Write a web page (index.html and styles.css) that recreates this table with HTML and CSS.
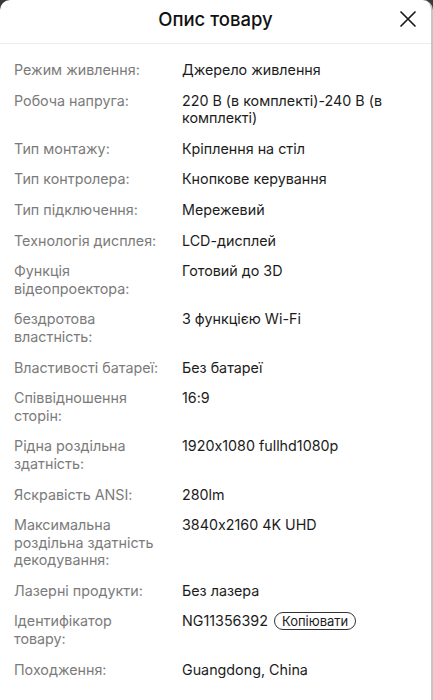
FILE: index.html
```html
<!DOCTYPE html>
<html lang="uk">
<head>
<meta charset="utf-8">
<link rel="stylesheet" href="styles.css">
</head>
<body>
<div class="sheet">
  <header class="head">
    <h1 class="title">Опис товару</h1>
    <button class="close" aria-label="Закрити">
      <svg width="18" height="18" viewBox="0 0 18 18"><path d="M2 2L16 16M16 2L2 16" stroke="#1a1a1a" stroke-width="1.7" stroke-linecap="round" fill="none"/></svg>
    </button>
  </header>
  <dl class="specs">
    <div class="row"><dt>Режим живлення:</dt><dd>Джерело живлення</dd></div>
    <div class="row"><dt>Робоча напруга:</dt><dd>220 В (в комплекті)-240 В (в комплекті)</dd></div>
    <div class="row"><dt>Тип монтажу:</dt><dd>Кріплення на стіл</dd></div>
    <div class="row"><dt>Тип контролера:</dt><dd>Кнопкове керування</dd></div>
    <div class="row"><dt>Тип підключення:</dt><dd>Мережевий</dd></div>
    <div class="row"><dt>Технологія дисплея:</dt><dd>LCD-дисплей</dd></div>
    <div class="row"><dt>Функція відеопроектора:</dt><dd>Готовий до 3D</dd></div>
    <div class="row"><dt>бездротова властність:</dt><dd>З функцією Wi-Fi</dd></div>
    <div class="row"><dt>Властивості батареї:</dt><dd>Без батареї</dd></div>
    <div class="row"><dt>Співвідношення сторін:</dt><dd>16:9</dd></div>
    <div class="row"><dt>Рідна роздільна здатність:</dt><dd>1920x1080 fullhd1080p</dd></div>
    <div class="row"><dt>Яскравість ANSI:</dt><dd>280lm</dd></div>
    <div class="row"><dt>Максимальна роздільна здатність декодування:</dt><dd>3840x2160 4K UHD</dd></div>
    <div class="row"><dt>Лазерні продукти:</dt><dd>Без лазера</dd></div>
    <div class="row"><dt>Ідентифікатор товару:</dt><dd>NG11356392 <span class="copy">Копіювати</span></dd></div>
    <div class="row"><dt>Походження:</dt><dd>Guangdong, China</dd></div>
  </dl>
</div>
</body>
</html>
```

FILE: styles.css
```css
html, body {
  margin: 0;
  padding: 0;
  background: #3a3a3a;
  height: 100%;
}
body {
  font-family: Inter, "Noto Sans", "Liberation Sans", sans-serif;
  font-feature-settings: "calt" 0;
  overflow: hidden;
}
.sheet {
  background: #fff;
  border-radius: 10px 10px 0 0;
  height: 700px;
  box-sizing: border-box;
  border-right: 2px solid #c6c6c6;
  width: 433px;
}
.head {
  height: 44px;
  display: flex;
  align-items: center;
  justify-content: center;
  position: relative;
  border-bottom: 1px solid #ececec;
  box-sizing: border-box;
}
.title {
  margin: 0;
  font-size: 18.5px;
  font-weight: 500;
  color: #111;
  margin-top: -6px;
}
.close {
  position: absolute;
  right: 12px;
  top: 8px;
  border: 0;
  background: none;
  padding: 2px;
  display: flex;
}
.specs {
  margin: 0;
  padding: 17px 14px 0 14px;
  display: flex;
  flex-direction: column;
  gap: 13px;
}
.row {
  display: grid;
  grid-template-columns: 150px 1fr;
  column-gap: 18px;
  font-size: 14.3px;
  line-height: 17.6px;
}
dt {
  color: #7b7b7b;
}
dd {
  margin: 0;
  color: #1c1c1c;
  padding-right: 20px;
}
.copy {
  display: inline-block;
  border: 1px solid #333;
  border-radius: 10px;
  font-size: 13px;
  line-height: 16px;
  padding: 0 7px;
  margin-left: 2px;
}
```
